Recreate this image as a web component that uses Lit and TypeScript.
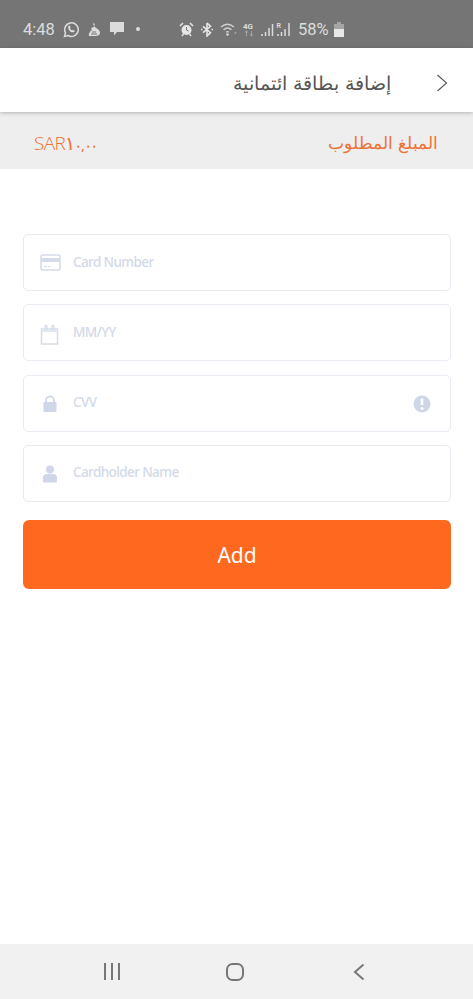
import { LitElement, html, css, svg } from "lit";
import { customElement } from "lit/decorators.js";

const fields = [
  { label: "Card Number", icon: svg`<rect x="1" y="1" width="19" height="15" rx="1.5" fill="none" stroke="#d5dbe9" stroke-width="1.6"/><rect x="1" y="4" width="19" height="4" fill="#d5dbe9"/><path d="M4 12.5h3M8 12.5h2" stroke="#d5dbe9" stroke-width="1"/>` },
  { label: "MM/YY", icon: svg`<path d="M1.5 5h16v15h-16z" fill="none" stroke="#d5dbe9" stroke-width="1.5"/><path d="M1.5 5h16v3h-16z" fill="#e3e7f0"/><path d="M5 6V2.5a1 1 0 0 1 2 0V6M12 6V2.5a1 1 0 0 1 2 0V6" fill="none" stroke="#d5dbe9" stroke-width="1.3"/>` },
  { label: "CVV", icon: svg`<path d="M5.5 8V5.5a4 4 0 0 1 8 0V8" fill="none" stroke="#d0d8e8" stroke-width="1.8" transform="translate(.5 1)"/><rect x="3.5" y="8" width="13" height="10" rx="1" fill="#cfd7e8"/>` },
  { label: "Cardholder Name", icon: svg`<circle cx="10" cy="5.5" r="4" fill="#cfd7e8"/><path d="M3 18v-3.5Q3 10.5 7 10.5h6q4 0 4 4V18a1 1 0 0 1-1 1H4a1 1 0 0 1-1-1z" fill="#cfd7e8" transform="translate(0 -.5)"/>` },
];

@customElement("app-root")
export class AppRoot extends LitElement {
  static styles = css`
    :host { display: flex; flex-direction: column; width: 473px; height: 999px; background: #fff; overflow: hidden; font-family: "Noto Sans", "Open Sans", sans-serif; }
    .status { height: 48px; flex: none; background: #757575; color: #dcdcdc; display: flex; align-items: center; box-sizing: border-box; padding: 10px 0 0 23px; font-size: 16.5px; font-family: Roboto, sans-serif; }
    .status svg { flex: none; display: block; }
    .group { display: flex; align-items: center; }
    .left { width: 156px; gap: 8px; }
    .right { gap: 6px; }
    .pct { margin: 0 -1px 0 1px; }
    .header { height: 64px; flex: none; background: #fff; display: flex; align-items: center; justify-content: flex-end; box-sizing: border-box; padding: 6px 25px 0 0; box-shadow: 0 1px 4px rgba(0,0,0,.25); position: relative; z-index: 1; }
    .title { font-family: "DejaVu Sans", sans-serif; font-size: 18.9px; font-weight: 200; color: #555; margin-right: 45px; direction: rtl; }
    .amount { height: 57px; flex: none; background: #eeeeee; display: flex; align-items: center; justify-content: space-between; padding: 4px 35px 0 34px; box-sizing: border-box; color: #ee7136; }
    .sar { font-size: 19px; font-weight: 300; letter-spacing: -.6px; font-family: "Open Sans", sans-serif; }
    .rest { font-size: 12px; font-weight: 600; letter-spacing: 0; }
    .need { font-size: 17px; font-family: "DejaVu Sans", sans-serif; font-weight: 200; direction: rtl; }
    .form { display: flex; flex-direction: column; gap: 13.3px; padding: 65px 22px 0 23px; }
    .field { height: 57px; box-sizing: border-box; border: 1px solid #e8ebf2; border-radius: 5px; display: flex; align-items: center; padding: 0 16px; gap: 11px; }
    .ic { width: 22px; height: 22px; flex: none; display: block; margin-top: 4px; }
    .label { flex: 1; font-size: 13.5px; font-weight: 500; color: #d3d9e8; margin-top: -2px; letter-spacing: -.6px; }
    .btn { margin-top: 5px; height: 69px; border-radius: 6px; background: #ff691f; color: #fff; display: flex; align-items: center; justify-content: center; font-size: 21px; }
    .spacer { flex: 1; }
    .nav { height: 55px; flex: none; background: #f1f1f1; display: grid; grid-template-columns: 103px 18px 105px 18px 109px 12px; align-items: center; }
    .nav svg { display: block; }
    .nav svg:nth-child(1) { grid-column: 2; }
    .nav svg:nth-child(2) { grid-column: 4; }
    .nav svg:nth-child(3) { grid-column: 6; }
  `;

  render() {
    return html`
      <div class="status">
        <div class="group left">
          <span>4:48</span>
          <svg width="16" height="17" viewBox="0 0 16 17"><path d="M1.5 15.5l1-3.6A6.8 6.8 0 1 1 5 14.5z" fill="none" stroke="#dcdcdc" stroke-width="1.5"/><path d="M5.5 5c1-1 1.500 0 2 1.500L7 7.500q1 1.500 2 2l1-.8 1.800 1.200c-.3 1.600-2 1.800-3.800 1C6 9.800 4.500 7 5.500 5z" fill="#dcdcdc"/></svg>
          <svg width="14" height="15" viewBox="0 0 14 15"><path d="M6 1l2 1-1 2 2 2q4 2 4 5 0 3-5 3H2q-1-2 1-4 1-2 2-2L4 6l3-1z" fill="#dcdcdc"/><path d="M5 10h4M4 12h6" stroke="#757575"/></svg>
          <svg width="16" height="16" viewBox="0 0 16 16"><path d="M1 1h14v10H8l-3 3.500V11H1z" fill="#dcdcdc"/></svg>
          <svg width="10" height="6" viewBox="0 0 10 6"><circle cx="5" cy="3" r="2" fill="#dcdcdc"/></svg>
        </div>
        <div class="group right">
          <svg width="15" height="15" viewBox="0 0 15 15"><circle cx="7.500" cy="8" r="5" fill="#e6e6e6"/><path d="M7.500 5v3l2 1" stroke="#757575" fill="none"/><path d="M1 4l3-3M14 4l-3-3M3 14l1.500-2M12 14l-1.500-2" stroke="#e6e6e6" stroke-width="1.500"/></svg>
          <svg width="14" height="15" viewBox="0 0 14 15"><path d="M7 1v13l3.500-3.300L3 4.300M7 1l3.500 3.300L3 10.700" fill="none" stroke="#e6e6e6" stroke-width="1.600"/><path d="M1 7.500h1.500M11.500 7.500H13" stroke="#e6e6e6" stroke-width="1.500"/></svg>
          <svg width="17" height="14" viewBox="0 0 17 14"><path d="M1 5q6.500-5.500 13 0M3.500 7.800q4-3.500 8 0M6 10.300q1.500-1.200 3 0" fill="none" stroke="#d0d0d0" stroke-width="1.300"/><circle cx="7.500" cy="12.500" r="1.200" fill="#dcdcdc"/><circle cx="15.500" cy="11" r="1" fill="#a5a5a5"/></svg>
          <svg width="12" height="15" viewBox="0 0 12 15"><text x="0" y="6.500" font-size="8" font-weight="700" font-family="Roboto, sans-serif" fill="#dcdcdc">4G</text><path d="M3.500 14V9M1.800 10.500l1.700-1.500 1.700 1.500M8.500 9v5M6.800 12.500l1.700 1.500 1.700-1.500" fill="none" stroke="#a5a5a5"/></svg>
          <svg width="30" height="15" viewBox="0 0 30 15"><path d="M1 14v-2M4.500 14v-4M8 14V6M11.500 14V2" stroke="#dcdcdc" stroke-width="1.500"/><text x="15.500" y="6" font-size="7" font-weight="700" font-family="Roboto, sans-serif" fill="#dcdcdc">R</text><path d="M17 14v-2M20.500 14v-4M24 14V7M28 14V1" stroke="#dcdcdc" stroke-width="1.500"/></svg>
          <span class="pct">58%</span>
          <svg width="10" height="15" viewBox="0 0 10 15"><path d="M3 0h4v2h3v13H0V2h3z" fill="#a5a5a5"/><rect y="7" width="10" height="8" fill="#e8e8e8"/></svg>
        </div>
      </div>
      <div class="header">
        <span class="title">إضافة بطاقة ائتمانية</span>
        <svg width="12" height="18" viewBox="0 0 12 18"><path d="M1.500 1l9 8-9 8" fill="none" stroke="#555" stroke-width="1.100"/></svg>
      </div>
      <div class="amount">
        <span class="sar">SAR١<span class="rest">٠,٠٠</span></span>
        <span class="need">المبلغ المطلوب</span>
      </div>
      <div class="form">
        ${fields.map((f, i) => html`
          <div class="field">
            <svg class="ic" viewBox="0 0 22 22">${f.icon}</svg>
            <span class="label">${f.label}</span>
            ${i === 2 ? html`<svg class="ic" width="18" height="18" viewBox="0 0 22 22"><circle cx="10" cy="10" r="8.500" fill="#ced6e8"/><path d="M10 4.500v6.500" stroke="#fff" stroke-width="2.600"/><circle cx="10" cy="14.500" r="1.500" fill="#fff"/></svg>` : ""}
          </div>`)}
        <div class="btn">Add</div>
      </div>
      <div class="spacer"></div>
      <div class="nav">
        <svg width="18" height="17" viewBox="0 0 18 17"><path d="M2 0v17M9 0v17M16 0v17" stroke="#777" stroke-width="2"/></svg>
        <svg width="18" height="18" viewBox="0 0 18 18"><rect x="1" y="1" width="16" height="16" rx="5.500" fill="none" stroke="#777" stroke-width="2"/></svg>
        <svg width="12" height="18" viewBox="0 0 12 18"><path d="M10.500 1.500L2 9l8.500 7.500" fill="none" stroke="#777" stroke-width="2"/></svg>
      </div>
    `;
  }
}
